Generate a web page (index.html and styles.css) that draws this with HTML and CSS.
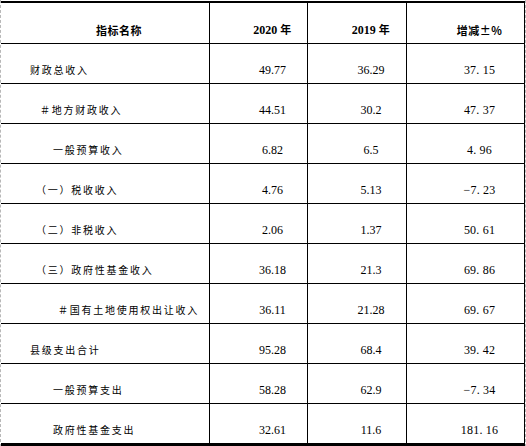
FILE: index.html
```html
<!DOCTYPE html>
<html lang="zh-CN">

<head>
    <meta charset="UTF-8">
    <title>财政收支情况</title>
    <link rel="stylesheet" href="styles.css">
</head>

<body>
    <div class="sheet">
        <table class="finance-table">
            <colgroup>
                <col class="col-name">
                <col class="col-2020">
                <col class="col-2019">
                <col class="col-rate">
            </colgroup>
            <thead>
                <tr>
                    <th class="cjk-head">指标名称</th>
                    <th>2020 <span class="cjk-head">年</span></th>
                    <th>2019 <span class="cjk-head">年</span></th>
                    <th class="cjk-head">增减±%</th>
                </tr>
            </thead>
            <tbody>
                <tr>
                    <td class="name lvl-0">财政总收入</td>
                    <td>49.77</td>
                    <td>36.29</td>
                    <td class="rate">37. 15</td>
                </tr>
                <tr>
                    <td class="name lvl-sharp">＃地方财政收入</td>
                    <td>44.51</td>
                    <td>30.2</td>
                    <td class="rate">47. 37</td>
                </tr>
                <tr>
                    <td class="name lvl-1">一般预算收入</td>
                    <td>6.82</td>
                    <td>6.5</td>
                    <td class="rate">4. 96</td>
                </tr>
                <tr>
                    <td class="name lvl-paren">（一）税收收入</td>
                    <td>4.76</td>
                    <td>5.13</td>
                    <td class="rate">−7. 23</td>
                </tr>
                <tr>
                    <td class="name lvl-paren">（二）非税收入</td>
                    <td>2.06</td>
                    <td>1.37</td>
                    <td class="rate">50. 61</td>
                </tr>
                <tr>
                    <td class="name lvl-paren">（三）政府性基金收入</td>
                    <td>36.18</td>
                    <td>21.3</td>
                    <td class="rate">69. 86</td>
                </tr>
                <tr>
                    <td class="name lvl-2">＃国有土地使用权出让收入</td>
                    <td>36.11</td>
                    <td>21.28</td>
                    <td class="rate">69. 67</td>
                </tr>
                <tr>
                    <td class="name lvl-0">县级支出合计</td>
                    <td>95.28</td>
                    <td>68.4</td>
                    <td class="rate">39. 42</td>
                </tr>
                <tr>
                    <td class="name lvl-1">一般预算支出</td>
                    <td>58.28</td>
                    <td>62.9</td>
                    <td class="rate">−7. 34</td>
                </tr>
                <tr class="last">
                    <td class="name lvl-1">政府性基金支出</td>
                    <td>32.61</td>
                    <td>11.6</td>
                    <td class="rate">181. 16</td>
                </tr>
            </tbody>
        </table>
    </div>
</body>

</html>
```

FILE: styles.css
```css
html,
body {
    margin: 0;
    padding: 0;
    background: #fff;
}

.sheet {
    width: 524px;
    height: 446px;
    border-left: 1px dashed #b8b8b8;
    border-right: 1px dashed #b8b8b8;
    padding-top: 1px;
    box-sizing: content-box;
}

.finance-table {
    width: 524px;
    table-layout: fixed;
    border-collapse: separate;
    border-spacing: 0;
    border-top: 2px solid #000;
    border-bottom: 3px solid #000;
    color: #000;
    font-family: "Liberation Serif", "Times New Roman", serif;
    font-size: 12px;
}

.col-name { width: 209px; }
.col-2020 { width: 98px; }
.col-2019 { width: 99px; }
.col-rate { width: 118px; }

th,
td {
    padding: 0 0 6px 28px;
    line-height: 14px;
    vertical-align: bottom;
    text-align: center;
    border-right: 1px solid #000;
    border-bottom: 1px solid #000;
    white-space: nowrap;
    overflow: hidden;
}

thead tr {
    height: 41px;
}

tbody tr {
    height: 40px;
}

tbody tr.last {
    height: 39px;
}

tr.last td {
    border-bottom: none;
}

th {
    font-weight: bold;
}

.cjk-head {
    font-family: "Noto Sans CJK SC", sans-serif;
    font-size: 11px;
    font-weight: bold;
    letter-spacing: 0.5px;
}

td.name {
    text-align: left;
    font-family: "Noto Sans CJK SC", sans-serif;
    font-size: 10px;
    letter-spacing: 1.75px;
}

.lvl-0 { padding-left: 29px; }
.lvl-sharp { padding-left: 39px; }
.lvl-1 { padding-left: 52px; }
.lvl-paren { padding-left: 35px; }
.lvl-2 { padding-left: 57px; }

td.rate {
    letter-spacing: 0.2px;
}
```
